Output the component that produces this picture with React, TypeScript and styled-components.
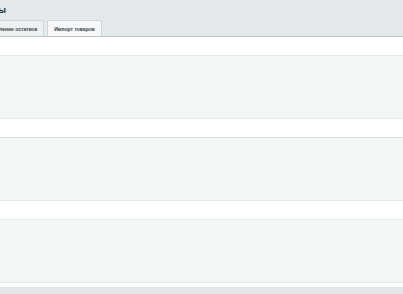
import React from 'react';
import styled, { createGlobalStyle } from 'styled-components';

const GlobalStyle = createGlobalStyle`
    html, body {
        margin: 0;
        padding: 0;
        background: #ffffff;
        overflow: hidden;
    }
    body {
        font-family: "Liberation Sans", Arial, sans-serif;
    }
`;

interface ITab {
    title: string;
    active?: boolean;
}

const tabs: ITab[] = [
    { title: 'Обновление остатков' },
    { title: 'Импорт товаров', active: true },
];

const sections = ['stock', 'import', 'log'];

const App = (): JSX.Element => {
    return (
        <>
            <GlobalStyle />
            <SPage>
                <SHeader>
                    <STitleBox>
                        <STitle>Товары</STitle>
                    </STitleBox>
                    <STabs>
                        {tabs.map((tab) => (
                            <STab key={tab.title} active={tab.active}>{tab.title}</STab>
                        ))}
                    </STabs>
                </SHeader>
                {sections.map((id, i) => (
                    <SSection key={id}>
                        <SSpacer />
                        <SPanel strong={i === 1} />
                    </SSection>
                ))}
                <SGap />
                <SFooter />
            </SPage>
        </>
    );
};

const SPage = styled.div`
    width: 403px;
    height: 294px;
    display: flex;
    flex-direction: column;
    overflow: hidden;
`;

const SHeader = styled.div`
    height: 36px;
    background: #e4eaec;
    border-bottom: 1px solid #bfc6c9;
    display: flex;
    flex-direction: column;
    overflow: hidden;
`;

const STitleBox = styled.div`
    height: 19px;
    display: flex;
    align-items: center;
`;

const STitle = styled.span`
    display: block;
    width: 120px;
    margin-left: -114px;
    text-align: right;
    font-size: 9px;
    font-weight: bold;
    color: #222a2e;
    white-space: nowrap;
    overflow: hidden;
`;

const STabs = styled.div`
    display: flex;
    align-items: flex-end;
    gap: 3px;
    margin-left: -24px;
    flex: 1;
`;

const STab = styled.div<{ active?: boolean }>`
    height: 16px;
    padding: 0 6px;
    display: flex;
    align-items: center;
    box-sizing: border-box;
    background: ${(p) => (p.active ? '#f5f7f8' : '#edf1f2')};
    border: 1px solid #cfd6d9;
    border-bottom: none;
    border-radius: 2px 2px 0 0;
    font-size: 5px;
    font-weight: bold;
    color: #3a4247;
    white-space: nowrap;
`;

const SSection = styled.div`
    display: flex;
    flex-direction: column;
`;

const SSpacer = styled.div`
    height: 18px;
    background: #ffffff;
`;

const SPanel = styled.div<{ strong?: boolean }>`
    height: 62px;
    background: #f3f6f7;
    border-top: 1px solid ${(p) => (p.strong ? '#d9dee1' : '#e3e8ea')};
    border-bottom: 1px solid #e3e8ea;
`;

const SGap = styled.div`
    height: 4px;
    background: #ffffff;
`;

const SFooter = styled.div`
    flex: 1;
    background: #e1e7ea;
`;

export default App;
